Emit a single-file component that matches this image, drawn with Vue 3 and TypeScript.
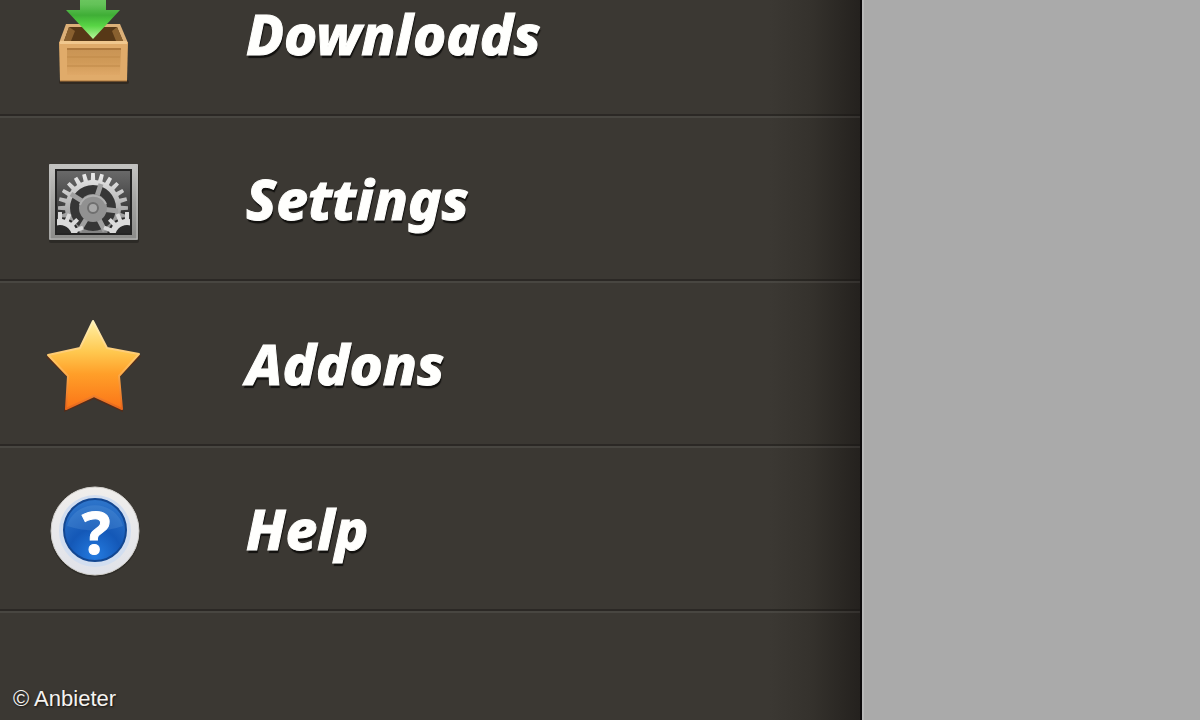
<script setup lang="ts">
interface MenuItem {
  id: 'downloads' | 'settings' | 'addons' | 'help'
  label: string
}

const items: MenuItem[] = [
  { id: 'downloads', label: 'Downloads' },
  { id: 'settings', label: 'Settings' },
  { id: 'addons', label: 'Addons' },
  { id: 'help', label: 'Help' },
]

// Outline of a toothed wheel around (cx, cy).
function gear(cx: number, cy: number, outer: number, root: number, teeth: number): string {
  const step = (Math.PI * 2) / teeth
  const points: string[] = []
  for (let i = 0; i < teeth; i++) {
    const a = i * step
    const corners: [number, number][] = [
      [root, -0.3],
      [outer, -0.2],
      [outer, 0.2],
      [root, 0.3],
    ]
    for (const [r, t] of corners) {
      const x = cx + r * Math.cos(a + t * step)
      const y = cy + r * Math.sin(a + t * step)
      points.push(`${x.toFixed(2)} ${y.toFixed(2)}`)
    }
  }
  return `M${points.join('L')}Z`
}

function ring(cx: number, cy: number, r: number): string {
  return `M${cx - r} ${cy}a${r} ${r} 0 1 0 ${r * 2} 0a${r} ${r} 0 1 0 ${-r * 2} 0Z`
}

const mainGear = gear(53, 53, 35, 28, 24) + ring(53, 53, 23)
const cornerGears = [20, 87].map((x) => gear(x, 82, 25, 18, 16) + ring(x, 82, 12))
</script>

<template>
  <div class="screen">
    <nav class="drawer" aria-label="Menu">
      <ul class="menu">
        <li v-for="item in items" :key="item.id">
          <a class="row" :href="`#${item.id}`">
            <svg class="icon" viewBox="0 0 110 109" aria-hidden="true">
              <g v-if="item.id === 'downloads'" transform="translate(0 22)">
                <defs>
                  <linearGradient id="wood" x1="0" y1="0" x2="0" y2="1">
                    <stop offset="0" stop-color="#c99454" />
                    <stop offset="0.5" stop-color="#d09a58" />
                    <stop offset="1" stop-color="#dfa867" />
                  </linearGradient>
                  <linearGradient id="arrow" gradientUnits="userSpaceOnUse" x1="0" y1="-14" x2="0" y2="39">
                    <stop offset="0" stop-color="#7fd070" />
                    <stop offset="0.35" stop-color="#63c258" />
                    <stop offset="0.55" stop-color="#3fae36" />
                    <stop offset="0.75" stop-color="#58d545" />
                    <stop offset="1" stop-color="#b9f89c" />
                  </linearGradient>
                </defs>
                <rect x="19" y="80" width="70" height="4" rx="2" fill="#292016" opacity="0.6" />
                <path d="M26 24H80L88 43H19Z" fill="#dcb078" />
                <path d="M29 27H77L83 41H24Z" fill="#573817" />
                <path d="M29 27L35 31L31 41H24ZM77 27L72 31L76 41H83Z" fill="#89602f" />
                <path d="M19 42H88L87 81H20Z" fill="#e0ab6a" />
                <path d="M20 41H87V44H20Z" fill="#f0c78e" />
                <path d="M27 49H81L80 75H27Z" fill="url(#wood)" />
                <path d="M27 49H81" stroke="#b07a3e" stroke-width="2" />
                <path d="M27 57H80M27 66H80" stroke="#bf8948" stroke-width="1" />
                <path d="M20 81H87" stroke="#a7733b" stroke-width="1" />
                <path d="M40 -14H66V10H80L53 39L26 10H40Z" fill="url(#arrow)" />
              </g>

              <g v-else-if="item.id === 'settings'" transform="translate(0 12)">
                <defs>
                  <linearGradient id="frame" x1="0" y1="0" x2="0" y2="1">
                    <stop offset="0" stop-color="#c5c5c3" />
                    <stop offset="0.5" stop-color="#a3a3a1" />
                    <stop offset="1" stop-color="#8b8b89" />
                  </linearGradient>
                  <linearGradient id="well" x1="0" y1="0" x2="0" y2="1">
                    <stop offset="0" stop-color="#6a6a6a" />
                    <stop offset="0.5" stop-color="#454545" />
                    <stop offset="1" stop-color="#181818" />
                  </linearGradient>
                  <linearGradient id="steel" x1="0" y1="0" x2="0" y2="1">
                    <stop offset="0" stop-color="#ececec" />
                    <stop offset="0.45" stop-color="#b5b5b5" />
                    <stop offset="1" stop-color="#707070" />
                  </linearGradient>
                  <clipPath id="window"><rect x="16" y="15" width="75" height="64" /></clipPath>
                </defs>
                <rect x="9" y="10" width="90" height="78" rx="2" fill="#23211e" opacity="0.6" />
                <rect x="9" y="9" width="89" height="76" rx="1" fill="url(#frame)" />
                <rect x="10" y="10" width="87" height="74" fill="none" stroke="#bdbdbb" stroke-width="1" />
                <rect x="16" y="15" width="75" height="64" fill="url(#well)" />
                <g clip-path="url(#window)">
                  <circle cx="53" cy="53" r="26" fill="#363636" />
                  <path :d="mainGear" fill="url(#steel)" fill-rule="evenodd" />
                  <path
                    d="M53 53L61 29M53 53L31 39M53 53L78 56M53 53L39 76M53 53L65 76"
                    fill="none" stroke="#a0a0a0" stroke-width="5"
                  />
                  <circle cx="53" cy="53" r="14" fill="#919191" />
                  <path d="M40 50A14 14 0 0 1 66 49" fill="none" stroke="#b0b0b0" stroke-width="2" />
                  <circle cx="53" cy="53" r="5" fill="#a8a8a8" stroke="#6f6f6f" stroke-width="2" />
                  <circle cx="20" cy="82" r="20" fill="#292929" />
                  <circle cx="87" cy="82" r="20" fill="#292929" />
                  <path v-for="d in cornerGears" :key="d" :d="d" fill="#dadada" fill-rule="evenodd" />
                </g>
                <rect x="16" y="15" width="75" height="64" fill="none" stroke="#242424" stroke-width="2" />
              </g>

              <g v-else-if="item.id === 'addons'" transform="translate(0 4)">
                <defs>
                  <linearGradient id="gold" x1="0" y1="0" x2="0" y2="1">
                    <stop offset="0" stop-color="#fff0a5" />
                    <stop offset="0.35" stop-color="#ffc84f" />
                    <stop offset="0.6" stop-color="#ff9f29" />
                    <stop offset="1" stop-color="#fb7417" />
                  </linearGradient>
                  <linearGradient id="rim" x1="0" y1="0" x2="0" y2="1">
                    <stop offset="0" stop-color="#fff3bd" />
                    <stop offset="0.5" stop-color="#ffbd59" />
                    <stop offset="1" stop-color="#e7651a" />
                  </linearGradient>
                </defs>
                <path
                  d="M53 11L67 38L101 44L79 66L83 100L54 87L24 100L28 66L6 45L40 38Z"
                  fill="#5d2811" opacity="0.75"
                />
                <path
                  d="M53 9L67 36L99 42L79 64L82 97L54 84L26 97L28 64L8 43L40 36Z"
                  fill="url(#gold)" stroke="url(#rim)" stroke-width="2" stroke-linejoin="round"
                />
              </g>

              <g v-else transform="translate(0 7)">
                <defs>
                  <radialGradient id="blue" cx="0.5" cy="0.9" r="0.85">
                    <stop offset="0" stop-color="#247be0" />
                    <stop offset="0.5" stop-color="#1458b7" />
                    <stop offset="1" stop-color="#2c73c9" />
                  </radialGradient>
                  <linearGradient id="plate" x1="0" y1="0" x2="0" y2="1">
                    <stop offset="0" stop-color="#f0eeeb" />
                    <stop offset="1" stop-color="#e0e2e9" />
                  </linearGradient>
                </defs>
                <circle cx="55" cy="52" r="45" fill="#24211e" opacity="0.5" />
                <circle cx="55" cy="51" r="44" fill="url(#plate)" stroke="#d3d1cd" stroke-width="1" />
                <circle cx="55" cy="51" r="36" fill="#d2def0" />
                <circle cx="55" cy="50" r="31" fill="url(#blue)" stroke="#134791" stroke-width="2" />
                <path d="M27 46A29 28 0 0 1 83 46Q56 55 27 46Z" fill="#78aee8" opacity="0.2" />
                <text class="mark" x="56" y="74" text-anchor="middle">?</text>
              </g>
            </svg>
            <span class="label">{{ item.label }}</span>
          </a>
        </li>
      </ul>
      <small class="credit">© Anbieter</small>
    </nav>
    <main class="content"></main>
  </div>
</template>

<style>
body {
  margin: 0;
}
</style>

<style scoped>
.screen {
  display: grid;
  grid-template-columns: 431fr 169fr;
  height: 100vh;
  overflow: hidden;
  background: #aaaaaa;
}

.drawer {
  position: relative;
  min-width: 0;
  overflow: hidden;
  box-sizing: border-box;
  border-right: 2px solid #0d0b0c;
  background: linear-gradient(to left, #24211e 0, #2b2824 20px, #35322d 50px, #3b3833 90px);
}

.menu {
  margin: -49px 0 0;
  padding: 0;
  list-style: none;
}

.row {
  display: flex;
  align-items: center;
  gap: 96px;
  box-sizing: border-box;
  height: 165px;
  padding-left: 40px;
  border-bottom: 2px solid rgba(25, 22, 20, 0.45);
  box-shadow: 0 2px 0 rgba(255, 255, 255, 0.07);
  color: #fffffd;
  text-decoration: none;
}

.icon {
  flex: none;
  width: 110px;
  height: 109px;
}

.label {
  font: italic 800 56px/60px "Noto Sans", "Open Sans", sans-serif;
  -webkit-text-stroke: 1px #fffffd;
  text-shadow: 1px 3px 1px #11100e;
}

.mark {
  fill: #ffffff;
  stroke: #ffffff;
  stroke-width: 1px;
  font: bold 60px "Noto Sans", "Open Sans", sans-serif;
}

.credit {
  position: absolute;
  bottom: 8px;
  left: 13px;
  color: #f4f3f1;
  font: 22px/26px "Liberation Sans", Arial, sans-serif;
  text-shadow: 1px 1px 2px #161412;
}

.content {
  border-left: 2px solid #b8b8b8;
  background: #aaaaaa;
}
</style>
